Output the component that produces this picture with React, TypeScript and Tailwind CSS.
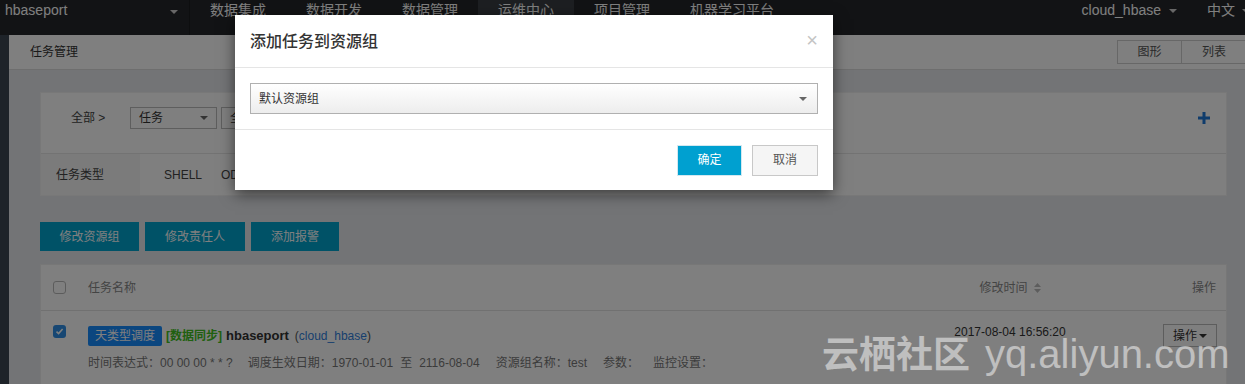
import React from 'react';

const Caret = ({ className = '' }: { className?: string }) => (
  <span className={`inline-block h-0 w-0 border-x-[4px] border-t-[4px] border-x-transparent ${className}`} />
);

const navItems = ['数据集成', '数据开发', '数据管理', '运维中心', '项目管理', '机器学习平台'];

const TopNav = () => (
  <div className="flex h-[35px] bg-[#25272b] text-white">
    <div className="flex w-[190px] items-start justify-between border-r border-[#1b1c1f] pl-[5px] pr-[11px] pt-[1px]">
      <span className="text-[14px] leading-[18px]">hbaseport</span>
      <Caret className="mt-[9px] border-t-[#cfcfcf]" />
    </div>
    {navItems.map((item) => (
      <div
        key={item}
        className={`px-5 pt-[1px] text-[14px] leading-[18px] ${item === '运维中心' ? 'bg-[#3a3e44]' : ''}`}
      >
        {item}
      </div>
    ))}
    <div className="ml-auto mr-[-5px] flex items-start pt-[1px] text-[14px] leading-[18px]">
      <span>cloud_hbase</span>
      <Caret className="ml-[8px] mt-[8px] border-t-[#cfcfcf]" />
      <span className="ml-[30px]">中文</span>
      <Caret className="ml-[7px] mt-[8px] border-t-[#cfcfcf]" />
    </div>
  </div>
);

const Checkbox = ({ checked = false }: { checked?: boolean }) =>
  checked ? (
    <span className="flex h-[13px] w-[13px] items-center justify-center rounded-[3px] bg-[#2f8fe6]">
      <svg width="9" height="9" viewBox="0 0 9 9">
        <path d="M1.5 4.6 L3.6 6.6 L7.6 2" fill="none" stroke="#fff" strokeWidth="1.5" />
      </svg>
    </span>
  ) : (
    <span className="block h-[13px] w-[13px] rounded-[3px] border border-[#b9b9b9] bg-white" />
  );

const FilterCard = () => (
  <div className="border border-[#f0f0f0] bg-white text-[12px] text-[#444]">
    <div className="flex h-[60px] items-start pl-[30px] pr-[16px] pt-[14px]">
      <span className="w-[59px] leading-[22px]">全部 &gt;</span>
      <div className="flex h-[22px] w-[87px] items-center justify-between border border-[#bdbdbd] px-[8px]">
        <span className="text-[#333]">任务</span>
        <Caret className="border-t-[#666]" />
      </div>
      <div className="ml-[4px] flex h-[22px] w-[110px] items-center border border-[#bdbdbd] px-[8px] text-[#333]">
        全部
      </div>
      <svg className="ml-auto mt-[5px]" width="12" height="12" viewBox="0 0 12 12">
        <rect x="4.5" y="0" width="3" height="12" fill="#1f78d8" />
        <rect x="0" y="4.5" width="12" height="3" fill="#1f78d8" />
      </svg>
    </div>
    <div className="flex h-[42px] border-t border-[#e6e6e6]">
      <div className="flex w-[99px] items-center bg-[#f7f7f7] pl-[15px]">任务类型</div>
      <div className="flex items-center gap-[19px] pl-[24px]">
        <span>SHELL</span>
        <span>ODPS_SQL</span>
      </div>
    </div>
  </div>
);

const ActionButtons = () => (
  <div className="mt-[26px] flex gap-[6px] text-[12px] text-white">
    <button className="h-[29px] w-[99px] bg-[#00a4cf]">修改资源组</button>
    <button className="h-[29px] w-[100px] bg-[#00a4cf]">修改责任人</button>
    <button className="h-[29px] w-[88px] bg-[#00a4cf]">添加报警</button>
  </div>
);

const TaskTable = () => (
  <div className="mt-[13px] border border-[#eee] bg-white text-[12px]">
    <div className="flex h-[46px] items-center border-b border-[#e3e3e3] text-[#888]">
      <div className="w-[47px] pl-[12px]">
        <Checkbox />
      </div>
      <div className="flex-1">任务名称</div>
      <div className="flex w-[220px] items-center justify-center gap-[6px]">
        <span>修改时间</span>
        <svg width="7" height="10" viewBox="0 0 7 10">
          <path d="M3.5 0 L7 4 H0 Z M0 6 H7 L3.5 10 Z" fill="#bbb" />
        </svg>
      </div>
      <div className="w-[106px] pr-[10px] text-right">操作</div>
    </div>
    <div className="flex h-[80px]">
      <div className="w-[47px] pl-[12px] pt-[14px]">
        <Checkbox checked />
      </div>
      <div className="flex-1 pt-[15px]">
        <div className="flex h-[20px] items-center">
          <span className="flex h-[20px] items-center rounded-[2px] bg-[#168cff] px-[7px] text-white">天类型调度</span>
          <span className="ml-[4px] font-bold text-[#40c020]">[数据同步]</span>
          <span className="ml-[4px] text-[13px] font-bold text-[#333]">hbaseport</span>
          <span className="ml-[6px] text-[#555]">
            (<span className="text-[#2f7fdc]">cloud_hbase</span>)
          </span>
        </div>
        <div className="mt-[9px] flex text-[12px] leading-[16px] text-[#777]">
          <span>时间表达式：00 00 00 * * ?</span>
          <span className="ml-[15px]">调度生效日期：1970-01-01</span>
          <span className="mx-[7px]">至</span>
          <span>2116-08-04</span>
          <span className="ml-[16px]">资源组名称：test</span>
          <span className="ml-[16px]">参数：</span>
          <span className="ml-[14px]">监控设置：</span>
        </div>
      </div>
      <div className="w-[220px] pt-[13px] text-center leading-[16px] text-[#333]">2017-08-04 16:56:20</div>
      <div className="flex w-[106px] items-start justify-end pr-[9px] pt-[13px]">
        <button className="flex h-[23px] w-[54px] items-center justify-center gap-[2px] border border-[#bbb] text-[#333]">
          操作
          <Caret className="border-t-[#333]" />
        </button>
      </div>
    </div>
  </div>
);

const Modal = () => (
  <div className="absolute left-[235px] top-[15px] w-[598px] bg-white shadow-[0_4px_14px_rgba(0,0,0,0.55)]">
    <div className="flex h-[53px] items-center justify-between border-b border-[#e5e5e5] px-[15px] pt-[2px]">
      <span className="text-[16px] font-medium text-[#333]">添加任务到资源组</span>
      <span className="mt-[-4px] text-[20px] leading-none text-[#c4c4c4]">×</span>
    </div>
    <div className="p-[15px]">
      <div className="flex h-[31px] items-center justify-between border border-[#b0b0b0] bg-gradient-to-b from-white to-[#ededed] pl-[8px] pr-[10px] text-[12px] text-[#333]">
        <span>默认资源组</span>
        <Caret className="border-t-[#666]" />
      </div>
    </div>
    <div className="flex h-[61px] items-center justify-end gap-[10px] border-t border-[#e5e5e5] px-[15px] text-[12px]">
      <button className="h-[31px] w-[65px] border border-[#d3e8f0] bg-[#00a0d0] text-white">确定</button>
      <button className="h-[31px] w-[66px] border border-[#c8c8c8] bg-[#f5f5f5] text-[#555]">取消</button>
    </div>
  </div>
);

export default function App() {
  return (
    <div className="relative h-[384px] w-[1245px] overflow-hidden bg-[#e6e8ec] font-['Liberation_Sans','Noto_Sans_CJK_SC',sans-serif]">
      <TopNav />
      <div className="flex h-[349px]">
        <aside className="w-[9px] bg-[#3d4652]" />
        <main className="flex-1">
          <div className="flex h-[35px] items-center justify-between border-b border-[#dcdcdc] bg-white pl-[21px] text-[12px] text-[#333]">
            <span>任务管理</span>
            <div className="mr-[-2px] flex text-[#555]">
              <button className="h-[24px] w-[65px] border border-[#cfcfcf] bg-white">图形</button>
              <button className="h-[24px] w-[65px] border border-l-0 border-[#cfcfcf] bg-white">列表</button>
            </div>
          </div>
          <div className="pl-[31px] pr-[18px] pt-[22px]">
            <FilterCard />
            <ActionButtons />
            <TaskTable />
          </div>
        </main>
      </div>

      <div className="absolute inset-0 bg-black/50" />
      <Modal />

      <div className="absolute left-[822px] top-[324px] flex items-baseline text-white/50">
        <span className="text-[37px] font-bold">云栖社区</span>
        <span className="ml-[15px] text-[40px]">yq.aliyun.com</span>
      </div>
    </div>
  );
}
